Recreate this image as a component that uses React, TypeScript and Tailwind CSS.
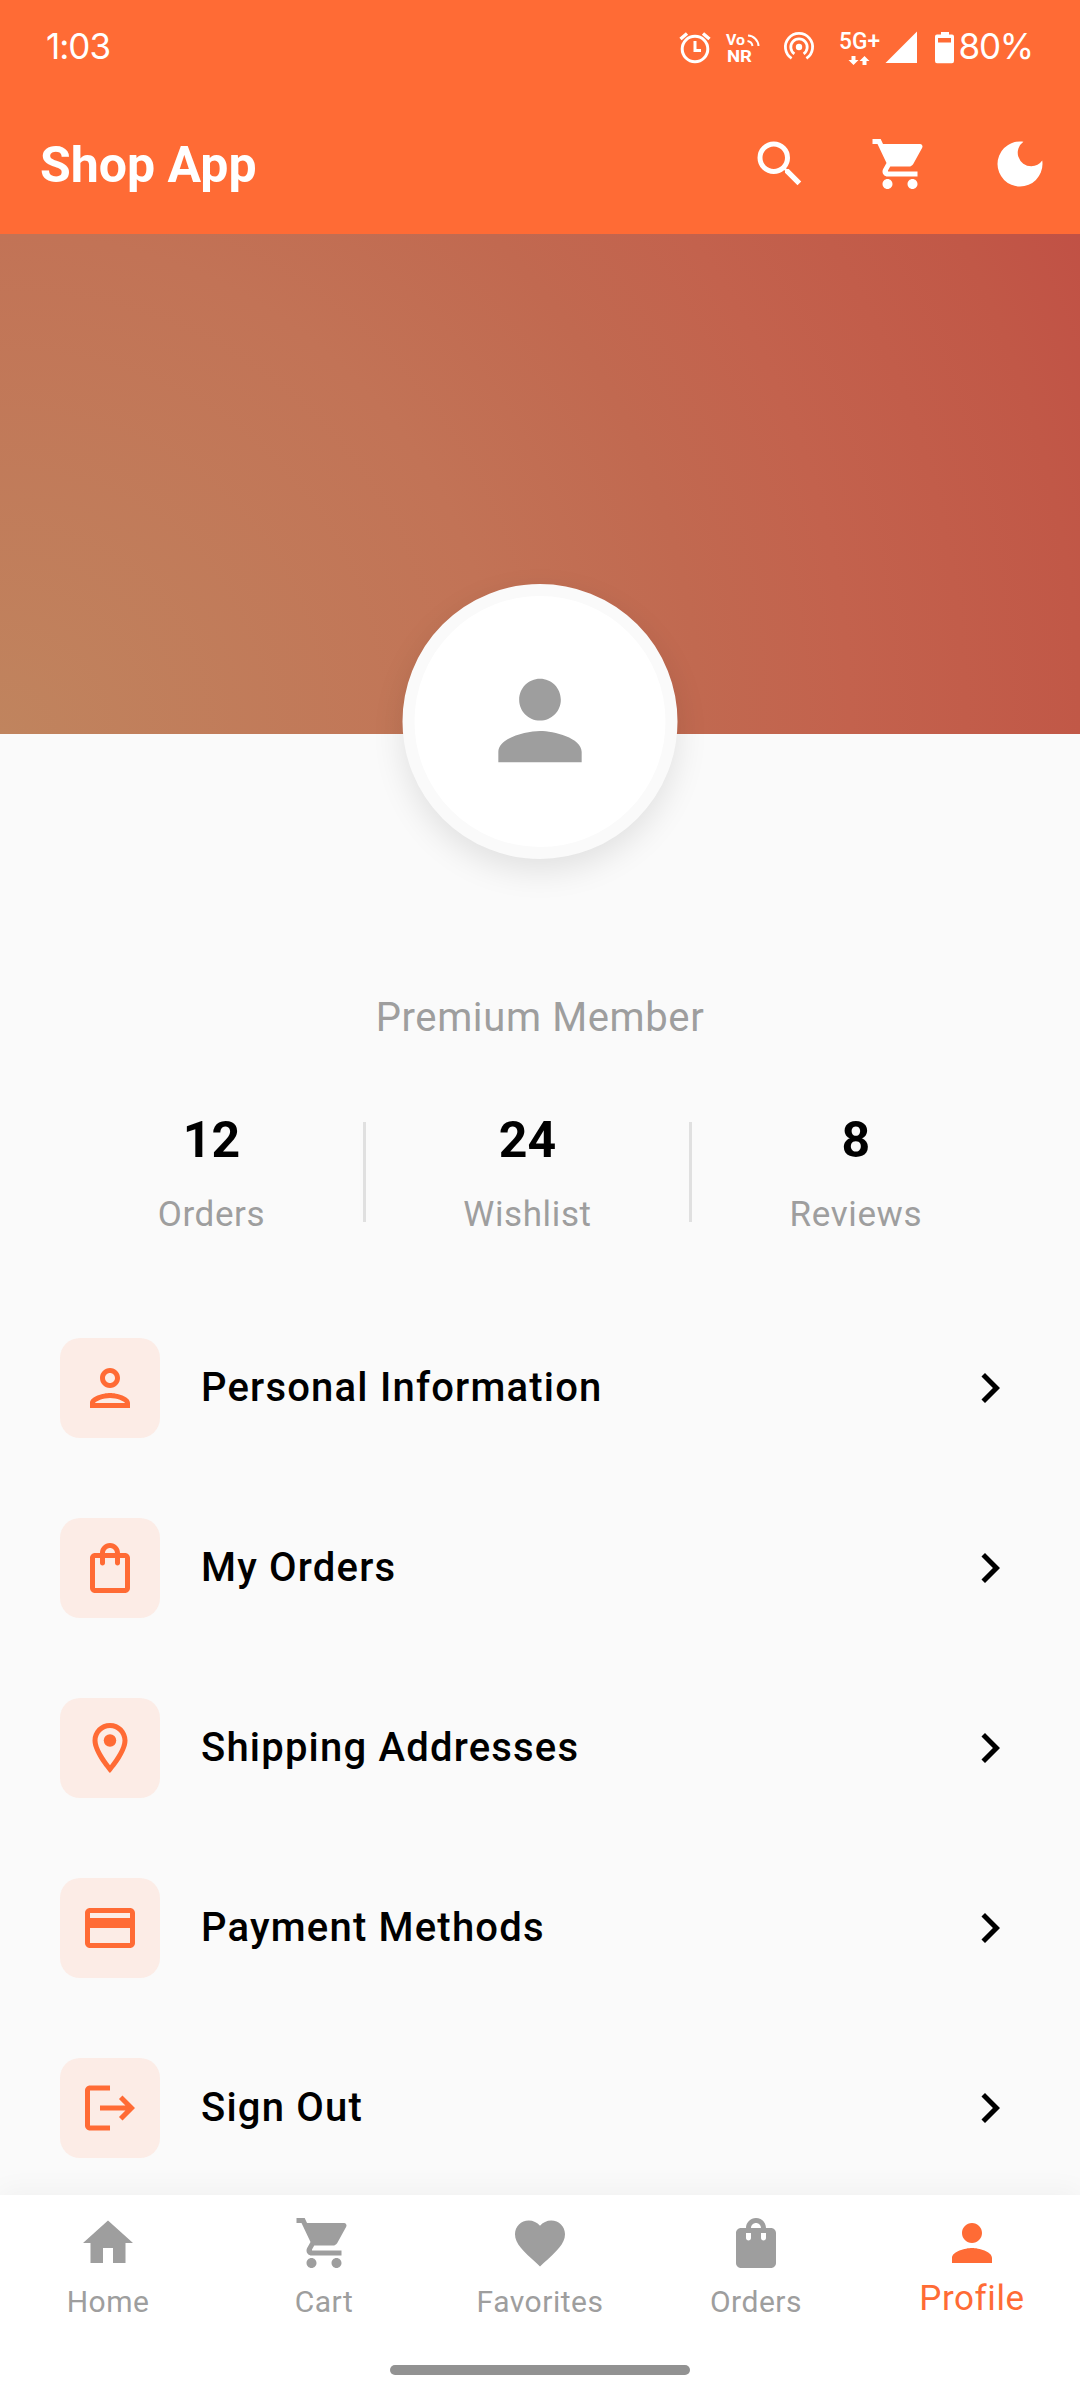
import type { IconType } from "react-icons";
import {
  MdChevronRight,
  MdDarkMode,
  MdFavorite,
  MdHome,
  MdLogout,
  MdOutlineLocationOn,
  MdOutlinePayment,
  MdOutlinePerson,
  MdOutlineShoppingBag,
  MdPerson,
  MdSearch,
  MdShoppingBag,
  MdShoppingCart,
} from "react-icons/md";

const STATS = [
  { value: "12", label: "Orders" },
  { value: "24", label: "Wishlist" },
  { value: "8", label: "Reviews" },
];

const MENU: { label: string; icon: IconType }[] = [
  { label: "Personal Information", icon: MdOutlinePerson },
  { label: "My Orders", icon: MdOutlineShoppingBag },
  { label: "Shipping Addresses", icon: MdOutlineLocationOn },
  { label: "Payment Methods", icon: MdOutlinePayment },
  { label: "Sign Out", icon: MdLogout },
];

const TABS: { label: string; icon: IconType; active?: boolean }[] = [
  { label: "Home", icon: MdHome },
  { label: "Cart", icon: MdShoppingCart },
  { label: "Favorites", icon: MdFavorite },
  { label: "Orders", icon: MdShoppingBag },
  { label: "Profile", icon: MdPerson, active: true },
];

export default function App() {
  return (
    <div className="flex h-[2400px] w-[1080px] flex-col overflow-hidden bg-[#fafafa] font-['Roboto',sans-serif]">
      <header className="h-[234px] shrink-0 bg-[#ff6b35] text-white">
        <StatusBar />
        <AppBar />
      </header>
      <main className="min-h-0 flex-1">
        <Cover />
        <p className="mt-[260px] text-center text-[40px] leading-[48px] tracking-[0.625px] text-[#9e9e9e]">
          Premium Member
        </p>
        <Stats />
        <Menu />
      </main>
      <BottomNav />
    </div>
  );
}

function StatusBar() {
  return (
    <div className="flex h-[93px] items-center justify-between pr-[47px] pl-[46px] font-['Inter',sans-serif] text-[35px]">
      <span className="tracking-[-1px]">1:03</span>
      <div className="flex items-center">
        <StatusIcons />
        <span className="tracking-[-1.2px]">80%</span>
      </div>
    </div>
  );
}

function StatusIcons() {
  return (
    <svg width="284" height="40" viewBox="674 26 284 40" fill="none" stroke="white">
      {/* alarm */}
      <circle cx="695" cy="48" r="12.8" strokeWidth="3" />
      <path d="M695 40v9.5h6" strokeWidth="3" />
      <path d="M680.5 38l6.5-5.5M709.5 38l-6.5-5.5" strokeWidth="3.4" />
      {/* VoNR */}
      <g fill="white" stroke="none" fontFamily="Roboto, sans-serif" fontWeight="700">
        <text x="726" y="44" fontSize="15.5" textLength="19" lengthAdjust="spacingAndGlyphs">Vo</text>
        <text x="727" y="61" fontSize="17" textLength="25" lengthAdjust="spacingAndGlyphs">NR</text>
      </g>
      <path d="M747.5 40a6 6 0 0 1 5 5M748 34.5a11 11 0 0 1 10.5 10.5" strokeWidth="2" />
      {/* hotspot */}
      <circle cx="799" cy="46" r="3.2" fill="white" stroke="none" />
      <path d="M794.4 52.9a8.2 8.2 0 1 1 9.2 0" strokeWidth="2.8" />
      <path d="M791.6 57.4a13.6 13.6 0 1 1 14.8 0" strokeWidth="2.8" />
      {/* 5G+ with data arrows */}
      <g fill="white" stroke="none">
        <text x="839" y="47.5" fontFamily="Roboto, sans-serif" fontWeight="500" fontSize="23" textLength="41" lengthAdjust="spacingAndGlyphs">5G+</text>
        <path d="M851.5 55h4v4h3l-5 5-5-5h3zM862.5 64h4v-4h3l-5-5-5 5h3z" />
        {/* signal */}
        <path d="M885.5 62L917 30.5V62z" />
        {/* battery */}
        <path fillRule="evenodd" d="M941 31h8v2.5h3q2 0 2 2V60q0 2.200-2 2.200h-15q-2 0-2-2.200V35.500q0-2 2-2h4zM938 37v4.500h13V37z" />
      </g>
    </svg>
  );
}

function AppBar() {
  return (
    <div className="flex h-[141px] items-center pl-10">
      <h1 className="flex-1 pt-[4px] text-[50px] font-bold">Shop App</h1>
      {[MdSearch, MdShoppingCart, MdDarkMode].map((Icon, i) => (
        <button key={i} className="flex size-[120px] items-center justify-center">
          <Icon size={60} />
        </button>
      ))}
    </div>
  );
}

function Cover() {
  return (
    <div className="relative h-[499.500px] bg-[radial-gradient(circle_at_0%_100%,#c0845e_0px,#c27356_500px,#c16950_700px,#c3624d_850px,#c15847_1080px,#c15145_1190px)]">
      <div className="absolute top-[349.500px] left-1/2 flex size-[275px] -translate-x-1/2 items-center justify-center rounded-full border-[12.500px] border-[#fafafa] bg-white shadow-[0_12px_32px_rgba(0,0,0,0.1)]">
        <MdPerson size={125} className="-mt-px text-[#9e9e9e]" />
      </div>
    </div>
  );
}

function Stats() {
  return (
    <div className="mt-[63px] flex items-center justify-evenly px-[60px]">
      {STATS.map((stat, i) => (
        <div key={stat.label} className="contents">
          {i > 0 ? <div className="h-[100px] w-[2.500px] bg-[#e0e0e0]" /> : null}
          <div className="flex flex-col items-center gap-[17px] pt-[2px]">
            <span className="text-[50px] leading-[66px] font-bold">
              {stat.value}
            </span>
            <span className="text-[35px] leading-[50px] tracking-[0.625px] text-[#9e9e9e]">
              {stat.label}
            </span>
          </div>
        </div>
      ))}
    </div>
  );
}

function Menu() {
  return (
    <ul className="mt-[58px]">
      {MENU.map(({ label, icon: Icon }) => (
        <li key={label} className="flex h-[180px] items-center px-[60px]">
          <span className="rounded-[20px] bg-[#fcece6] p-5 text-[#ff6b35]">
            <Icon size={60} />
          </span>
          <span className="ml-[41px] flex-1 text-[40px] font-medium tracking-[1.2px] text-black">
            {label}
          </span>
          <MdChevronRight size={60} className="text-black" />
        </li>
      ))}
    </ul>
  );
}

function BottomNav() {
  return (
    <nav className="relative h-[205px] shrink-0 bg-white pt-[18px] shadow-[0_-5px_25px_rgba(0,0,0,0.04)]">
      <ul className="grid h-[152px] grid-cols-5">
        {TABS.map(({ label, icon: Icon, active }) => (
          <li
            key={label}
            className={`flex flex-col items-center ${active ? "text-[#ff6b35]" : "text-[#9e9e9e]"}`}
          >
            <Icon size={60} />
            <span
              className={
                active
                  ? "mt-[5px] text-[35px] leading-[42px] tracking-[0.6px]"
                  : "mt-[11px] text-[30px] leading-[36px] tracking-[0.5px]"
              }
            >
              {label}
            </span>
          </li>
        ))}
      </ul>
      <div className="mx-auto h-[10px] w-[300px] rounded-full bg-[#929292]" />
    </nav>
  );
}
